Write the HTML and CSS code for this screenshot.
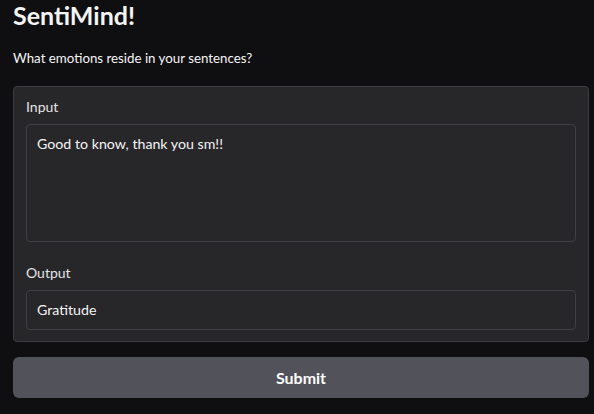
FILE: index.html
```html
<!DOCTYPE html>
<html>
<head>
<meta charset="utf-8">
<link rel="stylesheet" href="styles.css">
</head>
<body>
<main class="app">
  <h1 class="title">SentiMind!</h1>
  <p class="subtitle">What emotions reside in your sentences?</p>
  <section class="panel">
    <label class="field">
      <span class="label">Input</span>
      <div class="box box-input">Good to know, thank you sm!!</div>
    </label>
    <label class="field">
      <span class="label">Output</span>
      <div class="box box-output">Gratitude</div>
    </label>
  </section>
  <button class="submit">Submit</button>
</main>
</body>
</html>
```
FILE: styles.css
```css
html, body {
  margin: 0;
  padding: 0;
  background: #0f0f11;
}
body {
  font-family: Lato, "Liberation Sans", sans-serif;
  color: #f4f4f5;
  width: 594px;
  height: 414px;
  overflow: hidden;
}
.app {
  display: flex;
  flex-direction: column;
  padding: 0 5px 0 13px;
}
.title {
  margin: 0;
  font-size: 25px;
  font-weight: 700;
  line-height: 30px;
  height: 28px;
}
.subtitle {
  margin: 20px 0 0;
  font-size: 13.3px;
  line-height: 20px;
}
.panel {
  margin-top: 18px;
  background: #27272a;
  border: 1px solid #3c3c42;
  border-radius: 4px;
  padding: 10px 12px 11px;
  display: flex;
  flex-direction: column;
  gap: 21px;
}
.field {
  display: flex;
  flex-direction: column;
  gap: 8px;
}
.label {
  font-size: 14px;
  line-height: 19px;
  color: #e4e4e7;
}
.box {
  background: #27272a;
  border: 1px solid #3f3f46;
  border-radius: 4px;
  padding: 9px 10px;
  font-size: 14.2px;
  line-height: 19px;
  color: #f4f4f5;
  box-sizing: border-box;
}
.box-input {
  height: 118px;
}
.box-output {
  height: 40px;
}
.submit {
  margin-top: 15px;
  height: 41px;
  background: #52525b;
  border: none;
  border-radius: 6px;
  color: #ffffff;
  font-family: Lato, "Liberation Sans", sans-serif;
  font-size: 16px;
  font-weight: 700;
}
```
